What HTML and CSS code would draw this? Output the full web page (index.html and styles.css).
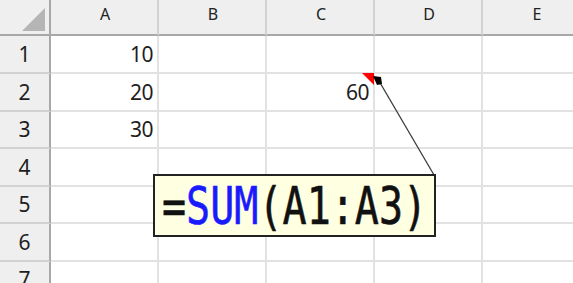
FILE: index.html
```html
<!DOCTYPE html>
<html lang="ja">
<head>
<meta charset="utf-8">
<link rel="stylesheet" href="styles.css">
</head>
<body>
<div class="sheet">
  <div class="grid">
    <div class="corner"><span class="tri"></span></div>
    <div class="ch">A</div><div class="ch">B</div><div class="ch">C</div><div class="ch">D</div><div class="ch">E</div>

    <div class="rh">1</div><div class="c num">10</div><div class="c"></div><div class="c"></div><div class="c"></div><div class="c"></div>
    <div class="rh">2</div><div class="c num">20</div><div class="c"></div><div class="c num">60</div><div class="c"></div><div class="c"></div>
    <div class="rh">3</div><div class="c num">30</div><div class="c"></div><div class="c"></div><div class="c"></div><div class="c"></div>
    <div class="rh">4</div><div class="c"></div><div class="c"></div><div class="c"></div><div class="c"></div><div class="c"></div>
    <div class="rh">5</div><div class="c"></div><div class="c"></div><div class="c"></div><div class="c"></div><div class="c"></div>
    <div class="rh">6</div><div class="c"></div><div class="c"></div><div class="c"></div><div class="c"></div><div class="c"></div>
    <div class="rh">7</div><div class="c"></div><div class="c"></div><div class="c"></div><div class="c"></div><div class="c"></div>
  </div>

  <svg class="connector" width="573" height="283" viewBox="0 0 573 283">
    <polygon points="362,73 374,73 374,85" fill="#ff0000"/>
    <line x1="379" y1="81" x2="434" y2="175" stroke="#3a3a3a" stroke-width="1.3"/>
    <polygon points="373,76 381,77 382,84 377,85" fill="#000"/>
  </svg>

  <div class="comment"><span class="ctext">=<span class="fn">SUM</span>(A1:A3)</span></div>
</div>
</body>
</html>
```

FILE: styles.css
```css
html, body {
  margin: 0;
  padding: 0;
  background: #ffffff;
  overflow: hidden;
}

.sheet {
  position: relative;
  width: 573px;
  height: 283px;
  overflow: hidden;
}

.grid {
  display: grid;
  grid-template-columns: 51px repeat(5, 108px);
  grid-template-rows: 36px 38px repeat(6, 37.5px);
  width: 591px;
}

.grid > div {
  box-sizing: border-box;
}

.corner {
  position: relative;
  background: #efefef;
  border-right: 2px solid #a8a8a8;
  border-bottom: 2px solid #a8a8a8;
}

.tri {
  position: absolute;
  left: 22px;
  top: 8px;
  width: 23px;
  height: 23px;
  background: #b5b5b5;
  clip-path: polygon(100% 0, 100% 100%, 0 100%);
}

.ch {
  background: #efefef;
  border-right: 2px solid #d2d2d2;
  border-bottom: 2px solid #a8a8a8;
  display: flex;
  align-items: center;
  justify-content: center;
  padding-bottom: 6px;
  padding-left: 2px;
  font-family: "Noto Sans", sans-serif;
  font-size: 16px;
  color: #222222;
}

.rh {
  background: #efefef;
  border-right: 2px solid #a8a8a8;
  border-bottom: 2px solid #d2d2d2;
  display: flex;
  align-items: center;
  justify-content: center;
  font-family: "Noto Sans", sans-serif;
  font-size: 21px;
  color: #1e1e1e;
}

.c {
  border-right: 2px solid #e2e2e2;
  border-bottom: 2px solid #e2e2e2;
  display: flex;
  align-items: center;
  justify-content: flex-end;
  padding-right: 4px;
  font-family: "Noto Sans", sans-serif;
  font-size: 21px;
  letter-spacing: -0.5px;
  color: #1e1e1e;
}

.connector {
  position: absolute;
  left: 0;
  top: 0;
}

.comment {
  position: absolute;
  left: 153px;
  top: 174px;
  width: 283px;
  height: 63px;
  box-sizing: border-box;
  border: 2px solid #222222;
  background: #ffffe1;
  display: flex;
  align-items: center;
  padding-left: 1px;
  overflow: hidden;
}

.ctext {
  display: inline-block;
  font-family: "DejaVu Sans Mono", monospace;
  font-size: 52px;
  line-height: 1;
  color: #111111;
  -webkit-text-stroke: 0.6px currentColor;
  transform: scaleX(0.77);
  transform-origin: 0 50%;
  white-space: nowrap;
  margin-left: 6px;
}

.fn {
  color: #1a1aff;
}
```
